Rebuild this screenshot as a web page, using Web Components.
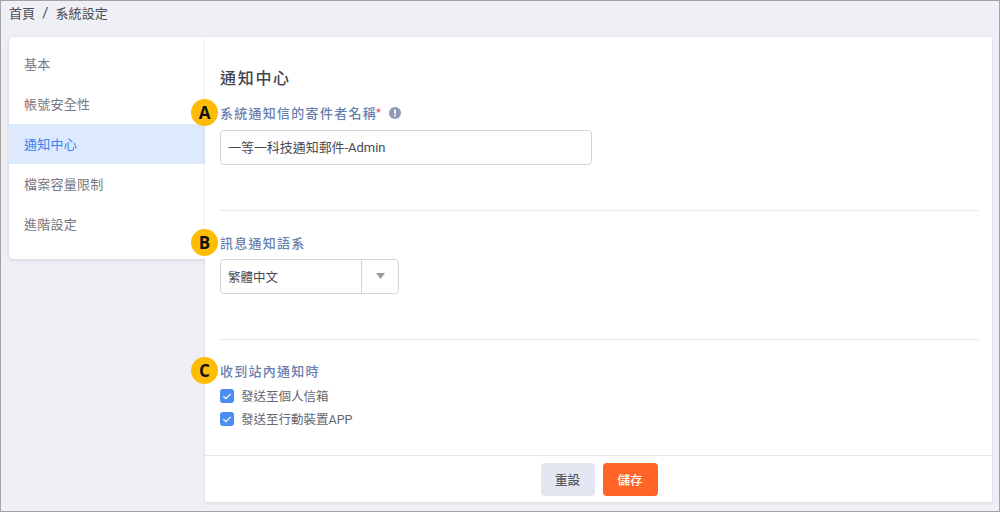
<!DOCTYPE html>
<html lang="zh-Hant">
<head>
<meta charset="utf-8">
<title>系統設定</title>
<style>
  html, body { margin: 0; height: 100%; }
  body {
    width: 1000px; height: 512px; overflow: hidden;
    font-family: Roboto, Inter, "Noto Sans CJK TC", sans-serif;
  }
</style>
</head>
<body>
<settings-page>
  <bread-crumb slot="crumb"></bread-crumb>
  <side-menu slot="menu"></side-menu>
  <notice-panel slot="panel"></notice-panel>
</settings-page>

<script>
const FONT = 'Roboto, Inter, "Noto Sans CJK TC", sans-serif';

class SettingsPage extends HTMLElement {
  constructor() {
    super();
    this.attachShadow({ mode: "open" });
    this.shadowRoot.innerHTML = `
    <style>
      :host {
        display: flex; flex-direction: column; box-sizing: border-box;
        width: 1000px; height: 512px; background: #eff0f6;
        border: 1px solid #a3a3a3;
        padding: 0 7px 9px 8px; font-family: ${FONT};
      }
      .body { display: flex; align-items: flex-start; flex: 1; min-height: 0; }
    </style>
    <slot name="crumb"></slot>
    <div class="body">
      <slot name="menu"></slot>
      <slot name="panel"></slot>
    </div>`;
  }
}

class BreadCrumb extends HTMLElement {
  constructor() {
    super();
    this.attachShadow({ mode: "open" });
    this.shadowRoot.innerHTML = `
    <style>
      :host {
        display: flex; align-items: center; height: 36px; box-sizing: border-box;
        padding-bottom: 13px; font-size: 13px; letter-spacing: .1px; color: #4d4d57;
      }
      .sep { margin: 0 7px; font-size: 15px; }
    </style>
    <span>首頁</span><span class="sep">/</span><span>系統設定</span>`;
  }
}

class SideMenu extends HTMLElement {
  constructor() {
    super();
    this.attachShadow({ mode: "open" });
    let items = ["基本", "帳號安全性", "通知中心", "檔案容量限制", "進階設定"];
    this.shadowRoot.innerHTML = `
    <style>
      :host {
        display: block; width: 196px; height: 222px; box-sizing: border-box;
        padding-top: 7px; background: #fff; border-radius: 5px 0 0 5px;
        box-shadow: 0 1px 4px rgba(60, 60, 90, .16);
      }
      div {
        display: flex; align-items: center; box-sizing: border-box; height: 40px;
        padding: 0 0 2px 15px;
        font-size: 13px; letter-spacing: .25px; color: #77777f;
      }
      .on { background: #dde9fd; color: #3d82f0; }
    </style>
    ${items.map(t => `<div class="${t == "通知中心" ? "on" : ""}">${t}</div>`).join("")}`;
  }
}

class LetterBadge extends HTMLElement {
  constructor() {
    super();
    this.attachShadow({ mode: "open" });
    this.shadowRoot.innerHTML = `
    <style>
      :host {
        position: absolute; left: -29px; top: -4px;
        display: flex; align-items: center; justify-content: center;
        width: 27px; height: 27px; border-radius: 50%; letter-spacing: 0;
        background: #ffbc05; color: #111; font: 700 17px "Open Sans", sans-serif;
      }
    </style>
    <slot></slot>`;
  }
}

class FieldLabel extends HTMLElement {
  constructor() {
    super();
    this.attachShadow({ mode: "open" });
    this.shadowRoot.innerHTML = `
    <style>
      :host {
        position: relative; display: flex; align-items: center; height: 19px;
        font-size: 13px; font-weight: 500; letter-spacing: 1.27px; color: #6b7fae;
      }
    </style>
    <slot></slot>`;
  }
}

class TextBox extends HTMLElement {
  constructor() {
    super();
    this.attachShadow({ mode: "open" });
    this.shadowRoot.innerHTML = `
    <style>
      :host {
        display: flex; align-items: center; box-sizing: border-box;
        width: 372px; height: 35px; padding: 0 0 2px 7px;
        background: #fff; border: 1px solid #d3d5dd; border-radius: 4px;
        font-size: 13px; letter-spacing: -.05px; color: #4a4a52;
      }
    </style>
    <slot></slot>`;
  }
}

class SelectBox extends HTMLElement {
  constructor() {
    super();
    this.attachShadow({ mode: "open" });
    this.shadowRoot.innerHTML = `
    <style>
      :host {
        display: flex; box-sizing: border-box; width: 179px; height: 35px;
        background: #fff; border: 1px solid #d3d5dd; border-radius: 4px;
        font-size: 12.5px; color: #4a4a52;
      }
      .value { display: flex; align-items: center; width: 133px; padding-left: 7px; border-right: 1px solid #d3d5dd; }
      .arrow { display: flex; align-items: center; justify-content: center; flex: 1; padding-bottom: 2px; }
    </style>
    <div class="value"><slot></slot></div>
    <div class="arrow"><svg width="9" height="6" viewBox="0 0 9 6"><path d="M0 0h9L4.500 6z" fill="#9a9aa0"/></svg></div>`;
  }
}

class CheckRow extends HTMLElement {
  constructor() {
    super();
    this.attachShadow({ mode: "open" });
    this.shadowRoot.innerHTML = `
    <style>
      :host {
        display: flex; align-items: center; gap: 7px; height: 23px;
        font-size: 12.5px; color: #66666e;
      }
      svg { flex: none; }
    </style>
    <svg width="14" height="14" viewBox="0 0 14 14">
      <rect width="14" height="14" rx="3" fill="#4b8df0"/>
      <path d="M3.4 7.2l2.5 2.4 4.8-4.8" fill="none" stroke="#fff" stroke-width="1.2"/>
    </svg>
    <slot></slot>`;
  }
}

class NoticePanel extends HTMLElement {
  constructor() {
    super();
    this.attachShadow({ mode: "open" });
    this.shadowRoot.innerHTML = `
    <style>
      :host {
        display: flex; flex-direction: column; box-sizing: border-box;
        width: 787px; height: 465px; background: #fff;
        box-shadow: 0 1px 3px rgba(60, 60, 90, .14);
      }
      .content { flex: 1; padding: 31px 13px 0 15px; }
      h2 {
        margin: 0 0 13px; height: 22px; line-height: 22px;
        font-size: 16px; font-weight: 500; letter-spacing: 1.7px; color: #45454d;
      }
      .hint { margin-left: 8px; }
      .star { color: #e8506a; font-size: 11px; letter-spacing: 0; margin-left: -1px; }
      text-box { margin-top: 8px; }
      select-box { margin-top: 7px; }
      hr { margin: 0; border: 0; border-top: 1px solid #e9eaef; }
      .first { margin-top: 45px; margin-bottom: 22px; }
      .second { margin-top: 45px; margin-bottom: 21px; }
      .checks { margin-top: 4px; }
      .foot {
        display: flex; justify-content: center; gap: 8px; height: 47px;
        padding: 7px 0 0 1px; box-sizing: border-box; border-top: 1px solid #e6e7ec;
      }
      button {
        width: 55px; height: 33px; border: 0; border-radius: 4px; padding: 0;
        font: 500 12.5px ${FONT};
      }
      .reset { width: 54px; background: #e3e7f1; color: #55555f; }
      .save { background: #ff6527; color: #fff; }
    </style>
    <div class="content">
      <h2>通知中心</h2>
      <field-label>
        <letter-badge>A</letter-badge>系統通知信的寄件者名稱<span class="star">*</span>
        <svg class="hint" width="12" height="12" viewBox="0 0 12 12">
          <circle cx="6" cy="6" r="6" fill="#8f99b3"/><rect x="5.1" y="2.6" width="1.8" height="4.2" rx=".6" fill="#fff"/><circle cx="6" cy="8.6" r="1" fill="#fff"/>
        </svg>
      </field-label>
      <text-box>一等一科技通知郵件-Admin</text-box>
      <hr class="first">
      <field-label><letter-badge>B</letter-badge>訊息通知語系</field-label>
      <select-box>繁體中文</select-box>
      <hr class="second">
      <field-label><letter-badge>C</letter-badge>收到站內通知時</field-label>
      <div class="checks">
        <check-row>發送至個人信箱</check-row>
        <check-row>發送至行動裝置APP</check-row>
      </div>
    </div>
    <div class="foot">
      <button class="reset">重設</button>
      <button class="save">儲存</button>
    </div>`;
  }
}

customElements.define("settings-page", SettingsPage);
customElements.define("bread-crumb", BreadCrumb);
customElements.define("side-menu", SideMenu);
customElements.define("letter-badge", LetterBadge);
customElements.define("field-label", FieldLabel);
customElements.define("text-box", TextBox);
customElements.define("select-box", SelectBox);
customElements.define("check-row", CheckRow);
customElements.define("notice-panel", NoticePanel);
</script>
</body>
</html>
